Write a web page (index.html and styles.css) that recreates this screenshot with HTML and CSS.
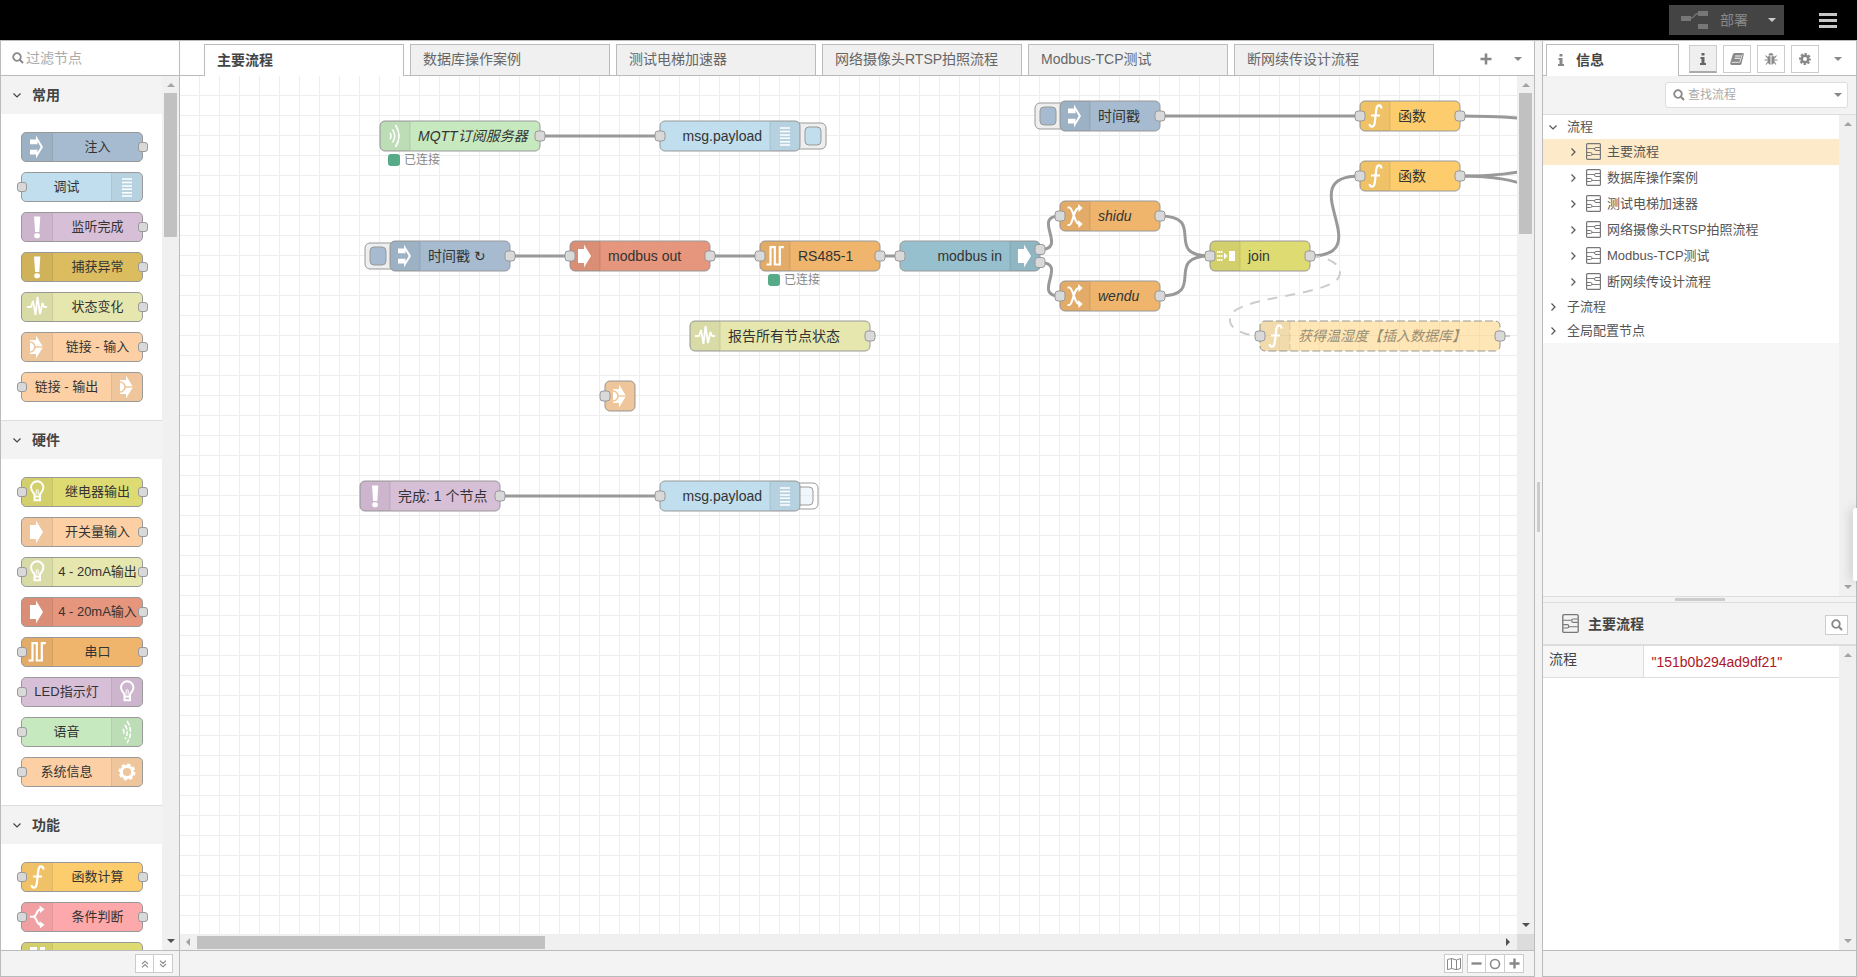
FILE: index.html
```html
<!DOCTYPE html>
<html lang="zh-CN">
<head>
<meta charset="utf-8">
<title>主要流程</title>
<link rel="stylesheet" href="styles.css">
</head>
<body>
<svg class="sprite" aria-hidden="true">
  <defs>
    <mask id="link-cut">
      <rect width="30" height="30" fill="#fff"/>
      <circle cx="8" cy="15" r="5" fill="none" stroke="#000" stroke-width="1.600"/>
      <path d="M13 15H21" stroke="#000" stroke-width="1.400"/>
    </mask>
  </defs>
  <symbol id="n-inject" viewBox="0 0 30 30"><path fill="#fff" fill-rule="evenodd" d="M8 7.500h6V3.500L21 15L14 26.500V22.500H8v-4.700h7.500V20.500L18.700 15L15.500 9.500v2.700H8z"/></symbol>
  <symbol id="n-arrow" viewBox="0 0 30 30"><path fill="#fff" d="M8 8h6V3.500L21 15L14 26.500V22H8z"/></symbol>
  <symbol id="n-debug" viewBox="0 0 30 30"><path stroke="#fff" stroke-width="1.600" d="M10 7h10M10 10.500h10M10 14h10M10 17.300h10M10 20.700h10M10 24h10"/></symbol>
  <symbol id="n-alert" viewBox="0 0 30 30"><path fill="#fff" d="M12 4.500h6.300L17.300 20h-4.200z"/><rect x="12.300" y="21.300" width="5.600" height="5" rx="2" fill="#fff"/></symbol>
  <symbol id="n-pulse" viewBox="0 0 30 30"><path fill="none" stroke="#fff" stroke-width="1.800" stroke-linejoin="bevel" d="M5 15h4l2-6 2.500 14L15.500 5 18 22l2.500-11 1.500 4h3"/></symbol>
  <symbol id="n-link" viewBox="0 0 30 30"><path mask="url(#link-cut)" fill="#fff" d="M8 8h6V3.500L21 15L14 26.500V22H8z"/></symbol>
  <symbol id="n-bulb" viewBox="0 0 30 30"><path fill="none" stroke="#fff" stroke-width="2" d="M12.500 17.500C11.500 15.500 9 14 9 10.500a6.200 6.200 0 0 1 12.400 0C21.400 14 19 15.500 18 17.500v5.700h-5.500zM12.500 19.500H18"/><path fill="none" stroke="#fff" stroke-width="1" d="M14.200 17.500v-4.300q1-1.400 2 0v4.300"/></symbol>
  <symbol id="n-serial" viewBox="0 0 30 30"><path fill="none" stroke="#fff" stroke-width="2.200" d="M6.500 23.500h4V6.200h4.300V23.500h5V6.200H23.800"/></symbol>
  <symbol id="n-waves" viewBox="0 0 30 30"><g fill="none" stroke="#fff" stroke-width="1.600"><path d="M10 12q2 3 0 6"/><path d="M12.500 8.500q4.500 6.500 0 13"/><path d="M15.500 4q7 11 0 22"/></g></symbol>
  <symbol id="n-speech" viewBox="0 0 30 30"><g fill="none" stroke="#fff" stroke-width="1.600" stroke-dasharray="5 1.500"><path d="M11 12q2 3 0 6"/><path d="M13 8q4.500 7 0 14"/><path d="M15 4q7 11 0 22"/></g></symbol>
  <symbol id="n-cog" viewBox="0 0 30 30"><circle cx="15" cy="15" r="5.600" fill="none" stroke="#fff" stroke-width="3"/><circle cx="15" cy="15" r="7.300" fill="none" stroke="#fff" stroke-width="2.400" stroke-dasharray="3.300 2.430"/></symbol>
  <symbol id="n-function" viewBox="0 0 30 30"><path fill="none" stroke="#fff" stroke-width="2.200" d="M21.500 7.500C21.300 4.500 20.300 4.300 19 4.300C16.800 4.300 16.600 6 16.300 8.500L14.800 21.500C14.400 24.500 13.700 25.600 11.800 25.600C10.300 25.600 9.700 24.800 9.600 23M11 14.500H20"/></symbol>
  <symbol id="n-switch" viewBox="0 0 30 30"><path fill="none" stroke="#fff" stroke-width="2" d="M8 14.700h3C15.500 14.700 13.500 7.500 19 7M11 14.700C15.500 14.700 13.500 22.500 19 23"/><path fill="#fff" d="M17.500 3.500L22.500 7.200L18 11zM17.500 19L22.500 22.800L18 26.500z"/></symbol>
  <symbol id="n-change" viewBox="0 0 30 30"><path fill="none" stroke="#fff" stroke-width="2.200" d="M7.500 6.500h1.800C13 6.500 14.500 23 19 23M7.500 24h1.800C13 24 13.500 7 19 7"/><path fill="#fff" d="M18 3L22.700 7L18.500 11zM18 19L22.700 23L18.500 27z"/></symbol>
  <symbol id="n-join" viewBox="0 0 30 30"><path fill="none" stroke="#fff" stroke-width="2" stroke-dasharray="1.500 .5" d="M7 11h5.500M7 15h5.500M7 19h5.500"/><path fill="#fff" d="M14 11.800L17.500 15L14 18.200zM19 10h6v10h-6z"/></symbol>
  <symbol id="n-blocks" viewBox="0 0 30 30"><path fill="#fff" d="M8 5h7v5H8zM18 5h5v5h-5z"/></symbol>

  <symbol id="i-search" viewBox="0 0 12 12"><circle cx="5" cy="5" r="3.800" fill="none" stroke="currentColor" stroke-width="1.800"/><path d="M7.800 7.800L11 11" stroke="currentColor" stroke-width="2"/></symbol>
  <symbol id="i-caret" viewBox="0 0 8 4"><path fill="currentColor" d="M0 0h8L4 4z"/></symbol>
  <symbol id="i-down" viewBox="0 0 8 8"><path fill="none" stroke="currentColor" stroke-width="1.200" d="M.5 2.500L4 6L7.500 2.500"/></symbol>
  <symbol id="i-right" viewBox="0 0 8 8"><path fill="none" stroke="currentColor" stroke-width="1.200" d="M2.500.5L6 4L2.500 7.500"/></symbol>
  <symbol id="i-up2" viewBox="0 0 8 8"><path fill="none" stroke="currentColor" stroke-width="1.100" d="M1 4L4 1.200L7 4M1 7.300L4 4.500L7 7.300"/></symbol>
  <symbol id="i-down2" viewBox="0 0 8 8"><path fill="none" stroke="currentColor" stroke-width="1.100" d="M1 .7L4 3.500L7 .7M1 4L4 6.800L7 4"/></symbol>
  <symbol id="i-plus" viewBox="0 0 12 12"><path stroke="currentColor" stroke-width="2.600" d="M.5 6h11M6 .5v11"/></symbol>
  <symbol id="i-minus" viewBox="0 0 12 12"><path stroke="currentColor" stroke-width="2.600" d="M.5 6h11"/></symbol>
  <symbol id="i-circle" viewBox="0 0 12 12"><circle cx="6" cy="6" r="4.500" fill="none" stroke="currentColor" stroke-width="1.600"/></symbol>
  <symbol id="i-map" viewBox="0 0 14 12"><path fill="none" stroke="currentColor" d="M.5 1.500L4.500.5l5 1.500 4-1.500v10l-4 1.200-5-1.200-4 1.200zM4.500.5v10M9.500 2v10"/></symbol>
  <symbol id="i-info" viewBox="0 0 6 12"><path fill="currentColor" d="M1.500 0h3v2.500h-3zM.5 4h4v6H6v2H0v-2h1.500V6H.5z"/></symbol>
  <symbol id="i-book" viewBox="0 0 14 12"><path fill="currentColor" fill-rule="evenodd" d="M4.500 0H13q1 .3.800 1.300L11.500 10.500q-.3 1.500-1.800 1.500H1.500Q0 11.500.3 9.800L2.800 1.500Q3.200.2 4.500 0zM5.200 2.500L5 3.500h5.500l.3-1zM4.600 4.800l-.3 1h5.600l.3-1z"/><path stroke="#fff" stroke-width=".8" fill="none" d="M1.800 9.300H9.200Q9.800 9.200 10 8.500L12.200 1.500"/></symbol>
  <symbol id="i-bug" viewBox="0 0 14 12"><path fill="currentColor" d="M4.500 2.500a2.500 2.500 0 0 1 5 0zM3.500 3.300h3v8.500Q3.500 11 3.500 7.500zM7.500 3.300h3v4.200q0 3.500-3 4.300z"/><path fill="none" stroke="currentColor" stroke-width="1.100" d="M3.500 4.800L1.500 2.500M10.500 4.800l2-2.300M3.500 7H.5M10.500 7h3M4 9L2 11.500M10 9l2 2.500"/></symbol>
  <symbol id="i-cog" viewBox="0 0 12 12"><circle cx="6" cy="6" r="3.300" fill="none" stroke="currentColor" stroke-width="2.600"/><circle cx="6" cy="6" r="5" fill="none" stroke="currentColor" stroke-width="2" stroke-dasharray="2.300 1.627" stroke-dashoffset="1.100"/></symbol>
  <symbol id="i-flow" viewBox="0 0 15 17"><g fill="none" stroke="currentColor"><rect x=".6" y=".6" width="13.800" height="15.800" rx="1" stroke-width="1.200"/><path d="M14 4.500H10q-1.500 0-1.500 1.500t1.500 1.500h4M1 9.500h3.500q1.500 0 1.500 1.500t-1.500 1.500H1"/><path stroke-width=".9" d="M1 5.500h7.500M6 11.500h8"/></g></symbol>
  <symbol id="i-deploy" viewBox="0 0 27 18"><path fill="currentColor" d="M0 5h10v5H0zM17 0h10v5H17zM17 13h10v5H17z"/><path fill="none" stroke="currentColor" stroke-width="1.400" d="M9 7.500C14.500 7.500 12 2.500 17.500 2.500"/></symbol>
  <symbol id="i-menu" viewBox="0 0 18 15"><path fill="currentColor" d="M0 0h18v3H0zM0 6h18v3H0zM0 12h18v3H0z"/></symbol>
</svg>

<header class="header">
  <button class="deploy" type="button">
    <svg class="deploy-icon"><use href="#i-deploy"/></svg><span>部署</span><svg class="caret"><use href="#i-caret"/></svg>
  </button>
  <button class="menu" type="button" aria-label="菜单"><svg><use href="#i-menu"/></svg></button>
</header>

<main class="main">
  <aside class="palette">
    <label class="palette-search"><svg class="ico"><use href="#i-search"/></svg><input type="text" placeholder="过滤节点"></label>
    <div class="scroll-area">
      <div class="palette-list">
        <section class="category">
          <h3><svg class="chev"><use href="#i-down"/></svg>常用</h3>
          <div class="nodes">
            <div class="node blue"><span class="icon"><svg><use href="#n-inject"/></svg></span><span class="label">注入</span><i class="port out"></i></div>
            <div class="node sky flip"><span class="icon"><svg><use href="#n-debug"/></svg></span><span class="label">调试</span><i class="port in"></i></div>
            <div class="node mauve"><span class="icon"><svg><use href="#n-alert"/></svg></span><span class="label">监听完成</span><i class="port out"></i></div>
            <div class="node gold"><span class="icon"><svg><use href="#n-alert"/></svg></span><span class="label">捕获异常</span><i class="port out"></i></div>
            <div class="node lime"><span class="icon"><svg><use href="#n-pulse"/></svg></span><span class="label">状态变化</span><i class="port out"></i></div>
            <div class="node peach"><span class="icon"><svg><use href="#n-link"/></svg></span><span class="label">链接 - 输入</span><i class="port out"></i></div>
            <div class="node peach flip"><span class="icon"><svg><use href="#n-link"/></svg></span><span class="label">链接 - 输出</span><i class="port in"></i></div>
          </div>
        </section>
        <section class="category">
          <h3><svg class="chev"><use href="#i-down"/></svg>硬件</h3>
          <div class="nodes">
            <div class="node yellow"><span class="icon"><svg><use href="#n-bulb"/></svg></span><span class="label">继电器输出</span><i class="port in"></i><i class="port out"></i></div>
            <div class="node peach"><span class="icon"><svg><use href="#n-arrow"/></svg></span><span class="label">开关量输入</span><i class="port out"></i></div>
            <div class="node lime"><span class="icon"><svg><use href="#n-bulb"/></svg></span><span class="label">4 - 20mA输出</span><i class="port in"></i><i class="port out"></i></div>
            <div class="node salmon"><span class="icon"><svg><use href="#n-arrow"/></svg></span><span class="label">4 - 20mA输入</span><i class="port out"></i></div>
            <div class="node orange"><span class="icon"><svg><use href="#n-serial"/></svg></span><span class="label">串口</span><i class="port in"></i><i class="port out"></i></div>
            <div class="node mauve flip"><span class="icon"><svg><use href="#n-bulb"/></svg></span><span class="label">LED指示灯</span><i class="port in"></i></div>
            <div class="node green flip"><span class="icon"><svg><use href="#n-speech"/></svg></span><span class="label">语音</span><i class="port in"></i></div>
            <div class="node peach flip"><span class="icon"><svg><use href="#n-cog"/></svg></span><span class="label">系统信息</span><i class="port in"></i></div>
          </div>
        </section>
        <section class="category">
          <h3><svg class="chev"><use href="#i-down"/></svg>功能</h3>
          <div class="nodes">
            <div class="node amber"><span class="icon"><svg><use href="#n-function"/></svg></span><span class="label">函数计算</span><i class="port in"></i><i class="port out"></i></div>
            <div class="node pink"><span class="icon"><svg><use href="#n-switch"/></svg></span><span class="label">条件判断</span><i class="port in"></i><i class="port out"></i></div>
            <div class="node yellow"><span class="icon"><svg><use href="#n-blocks"/></svg></span><span class="label"></span></div>
          </div>
        </section>
      </div>
      <div class="vbar" aria-hidden="true"><svg class="arrow up"><use href="#i-caret"/></svg><i class="thumb tall"></i><svg class="arrow end dark"><use href="#i-caret"/></svg></div>
    </div>
    <footer class="footer">
      <div class="group"><button type="button" aria-label="全部折叠"><svg class="tiny"><use href="#i-up2"/></svg></button><button type="button" aria-label="全部展开"><svg class="tiny"><use href="#i-down2"/></svg></button></div>
    </footer>
  </aside>

  <section class="workspace">
    <div class="tabbar" role="tablist">
      <div class="tabs">
        <button class="tab active" role="tab" type="button">主要流程</button>
        <button class="tab" role="tab" type="button">数据库操作案例</button>
        <button class="tab" role="tab" type="button">测试电梯加速器</button>
        <button class="tab" role="tab" type="button">网络摄像头RTSP拍照流程</button>
        <button class="tab" role="tab" type="button">Modbus-TCP测试</button>
        <button class="tab" role="tab" type="button">断网续传设计流程</button>
      </div>
      <button class="bare" type="button" aria-label="添加流程"><svg class="ico"><use href="#i-plus"/></svg></button>
      <button class="bare" type="button" aria-label="流程列表"><svg class="caret"><use href="#i-caret"/></svg></button>
    </div>
    <div class="scroll-area">
      <div class="canvas">
        <svg class="flow" width="1400" height="900">
          <g class="wires">
            <path d="M360 60H480"/><path d="M330 180H390"/><path d="M530 180H580"/><path d="M700 180H720"/>
            <path d="M860 173.500C889 173.500 851 140 880 140"/><path d="M860 186.500C889 186.500 851 220 880 220"/>
            <path d="M980 140C1028 140 982 180 1030 180"/><path d="M980 220C1028 220 982 180 1030 180"/>
            <path d="M1130 180C1201 180 1109 100 1180 100"/>
            <path d="M980 40H1180"/><path d="M320 420H480"/>
            <path d="M1280 40C1355 40 1345 46 1420 46"/>
            <path d="M1280 100C1355 100 1345 88 1420 88"/><path d="M1280 100C1355 100 1345 120 1420 120"/>
            <path class="off" d="M1130 180C1145 180 1160 187.500 1160 195S1160 210 1105 220S1050 237.500 1050 245S1065 260 1080 260"/>
            <path class="off" d="M1320 260H1400"/>
          </g>

          <g transform="translate(200 45)">
            <rect class="body green" width="160" height="30" rx="5"/><path class="shade" d="M5 0H30V30H5a5 5 0 0 1-5-5V5a5 5 0 0 1 5-5z"/><path class="rule" d="M30 1V29"/><use href="#n-waves" width="30" height="30"/>
            <text class="it" x="38" y="20">MQTT订阅服务器</text><rect class="pt" x="155" y="10" width="10" height="10" rx="3"/>
            <rect class="dot" x="8" y="33" width="12" height="12" rx="3"/><text class="status" x="24" y="43">已连接</text>
          </g>
          <g transform="translate(480 45)">
            <rect class="btn" x="134" y="2" width="32" height="26" rx="5"/><rect class="knob sky" x="145" y="6" width="16" height="18" rx="4"/>
            <rect class="body sky" width="140" height="30" rx="5"/><path class="shade" d="M110 0H135a5 5 0 0 1 5 5V25a5 5 0 0 1-5 5H110z"/><path class="rule" d="M110 1V29"/><use href="#n-debug" x="110" width="30" height="30"/>
            <text class="end" x="102" y="20">msg.payload</text><rect class="pt" x="-5" y="10" width="10" height="10" rx="3"/>
          </g>
          <g transform="translate(210 165)">
            <rect class="btn" x="-25" y="2" width="32" height="26" rx="5"/><rect class="knob blue" x="-20" y="6" width="16" height="18" rx="4"/>
            <rect class="body blue" width="120" height="30" rx="5"/><path class="shade" d="M5 0H30V30H5a5 5 0 0 1-5-5V5a5 5 0 0 1 5-5z"/><path class="rule" d="M30 1V29"/><use href="#n-inject" width="30" height="30"/>
            <text x="38" y="20">时间戳 ↻</text><rect class="pt" x="115" y="10" width="10" height="10" rx="3"/>
          </g>
          <g transform="translate(390 165)">
            <rect class="body salmon" width="140" height="30" rx="5"/><path class="shade" d="M5 0H30V30H5a5 5 0 0 1-5-5V5a5 5 0 0 1 5-5z"/><path class="rule" d="M30 1V29"/><use href="#n-arrow" width="30" height="30"/>
            <text x="38" y="20">modbus out</text><rect class="pt" x="-5" y="10" width="10" height="10" rx="3"/><rect class="pt" x="135" y="10" width="10" height="10" rx="3"/>
          </g>
          <g transform="translate(580 165)">
            <rect class="body orange" width="120" height="30" rx="5"/><path class="shade" d="M5 0H30V30H5a5 5 0 0 1-5-5V5a5 5 0 0 1 5-5z"/><path class="rule" d="M30 1V29"/><use href="#n-serial" width="30" height="30"/>
            <text x="38" y="20">RS485-1</text><rect class="pt" x="-5" y="10" width="10" height="10" rx="3"/><rect class="pt" x="115" y="10" width="10" height="10" rx="3"/>
            <rect class="dot" x="8" y="33" width="12" height="12" rx="3"/><text class="status" x="24" y="43">已连接</text>
          </g>
          <g transform="translate(720 165)">
            <rect class="body teal" width="140" height="30" rx="5"/><path class="shade" d="M110 0H135a5 5 0 0 1 5 5V25a5 5 0 0 1-5 5H110z"/><path class="rule" d="M110 1V29"/><use href="#n-arrow" x="110" width="30" height="30"/>
            <text class="end" x="102" y="20">modbus in</text><rect class="pt" x="-5" y="10" width="10" height="10" rx="3"/><rect class="pt" x="135" y="3.500" width="10" height="10" rx="3"/><rect class="pt" x="135" y="16.500" width="10" height="10" rx="3"/>
          </g>
          <g transform="translate(880 125)">
            <rect class="body orange" width="100" height="30" rx="5"/><path class="shade" d="M5 0H30V30H5a5 5 0 0 1-5-5V5a5 5 0 0 1 5-5z"/><path class="rule" d="M30 1V29"/><use href="#n-change" width="30" height="30"/>
            <text class="it" x="38" y="20">shidu</text><rect class="pt" x="-5" y="10" width="10" height="10" rx="3"/><rect class="pt" x="95" y="10" width="10" height="10" rx="3"/>
          </g>
          <g transform="translate(880 205)">
            <rect class="body orange" width="100" height="30" rx="5"/><path class="shade" d="M5 0H30V30H5a5 5 0 0 1-5-5V5a5 5 0 0 1 5-5z"/><path class="rule" d="M30 1V29"/><use href="#n-change" width="30" height="30"/>
            <text class="it" x="38" y="20">wendu</text><rect class="pt" x="-5" y="10" width="10" height="10" rx="3"/><rect class="pt" x="95" y="10" width="10" height="10" rx="3"/>
          </g>
          <g transform="translate(1030 165)">
            <rect class="body yellow" width="100" height="30" rx="5"/><path class="shade" d="M5 0H30V30H5a5 5 0 0 1-5-5V5a5 5 0 0 1 5-5z"/><path class="rule" d="M30 1V29"/><use href="#n-join" width="30" height="30"/>
            <text x="38" y="20">join</text><rect class="pt" x="-5" y="10" width="10" height="10" rx="3"/><rect class="pt" x="95" y="10" width="10" height="10" rx="3"/>
          </g>
          <g transform="translate(880 25)">
            <rect class="btn" x="-25" y="2" width="32" height="26" rx="5"/><rect class="knob blue" x="-20" y="6" width="16" height="18" rx="4"/>
            <rect class="body blue" width="100" height="30" rx="5"/><path class="shade" d="M5 0H30V30H5a5 5 0 0 1-5-5V5a5 5 0 0 1 5-5z"/><path class="rule" d="M30 1V29"/><use href="#n-inject" width="30" height="30"/>
            <text x="38" y="20">时间戳</text><rect class="pt" x="95" y="10" width="10" height="10" rx="3"/>
          </g>
          <g transform="translate(1180 25)">
            <rect class="body amber" width="100" height="30" rx="5"/><path class="shade" d="M5 0H30V30H5a5 5 0 0 1-5-5V5a5 5 0 0 1 5-5z"/><path class="rule" d="M30 1V29"/><use href="#n-function" width="30" height="30"/>
            <text x="38" y="20">函数</text><rect class="pt" x="-5" y="10" width="10" height="10" rx="3"/><rect class="pt" x="95" y="10" width="10" height="10" rx="3"/>
          </g>
          <g transform="translate(1180 85)">
            <rect class="body amber" width="100" height="30" rx="5"/><path class="shade" d="M5 0H30V30H5a5 5 0 0 1-5-5V5a5 5 0 0 1 5-5z"/><path class="rule" d="M30 1V29"/><use href="#n-function" width="30" height="30"/>
            <text x="38" y="20">函数</text><rect class="pt" x="-5" y="10" width="10" height="10" rx="3"/><rect class="pt" x="95" y="10" width="10" height="10" rx="3"/>
          </g>
          <g transform="translate(1080 245)">
            <g class="disabled"><rect class="body amber" width="240" height="30" rx="5"/><path class="shade" d="M5 0H30V30H5a5 5 0 0 1-5-5V5a5 5 0 0 1 5-5z"/><path class="rule" d="M30 1V29"/><text class="it" x="38" y="20">获得温湿度【插入数据库】</text></g>
            <use href="#n-function" width="30" height="30"/>
            <rect class="pt" x="-5" y="10" width="10" height="10" rx="3"/><rect class="pt" x="235" y="10" width="10" height="10" rx="3"/>
          </g>
          <g transform="translate(510 245)">
            <rect class="body lime" width="180" height="30" rx="5"/><path class="shade" d="M5 0H30V30H5a5 5 0 0 1-5-5V5a5 5 0 0 1 5-5z"/><path class="rule" d="M30 1V29"/><use href="#n-pulse" width="30" height="30"/>
            <text x="38" y="20">报告所有节点状态</text><rect class="pt" x="175" y="10" width="10" height="10" rx="3"/>
          </g>
          <g transform="translate(425 305)">
            <rect class="body peach" width="30" height="30" rx="5"/><rect class="shade" width="30" height="30" rx="5"/><use href="#n-link" width="30" height="30"/>
            <rect class="pt" x="-5" y="10" width="10" height="10" rx="3"/>
          </g>
          <g transform="translate(180 405)">
            <rect class="body mauve" width="140" height="30" rx="5"/><path class="shade" d="M5 0H30V30H5a5 5 0 0 1-5-5V5a5 5 0 0 1 5-5z"/><path class="rule" d="M30 1V29"/><use href="#n-alert" width="30" height="30"/>
            <text x="38" y="20">完成: 1 个节点</text><rect class="pt" x="135" y="10" width="10" height="10" rx="3"/>
          </g>
          <g transform="translate(480 405)">
            <rect class="btn clear" x="126" y="2" width="32" height="26" rx="5"/><rect class="knob sky clear" x="137" y="6" width="16" height="18" rx="4"/>
            <rect class="body sky" width="140" height="30" rx="5"/><path class="shade" d="M110 0H135a5 5 0 0 1 5 5V25a5 5 0 0 1-5 5H110z"/><path class="rule" d="M110 1V29"/><use href="#n-debug" x="110" width="30" height="30"/>
            <text class="end" x="102" y="20">msg.payload</text><rect class="pt" x="-5" y="10" width="10" height="10" rx="3"/>
          </g>
        </svg>
      </div>
      <div class="vbar" aria-hidden="true"><svg class="arrow up"><use href="#i-caret"/></svg><i class="thumb"></i><svg class="arrow end dark"><use href="#i-caret"/></svg></div>
    </div>
    <div class="hbar" aria-hidden="true"><svg class="arrow left"><use href="#i-caret"/></svg><i class="hthumb"></i><svg class="arrow right dark"><use href="#i-caret"/></svg><i class="corner"></i></div>
    <footer class="footer">
      <div class="group"><button type="button" aria-label="导航图"><svg class="map"><use href="#i-map"/></svg></button></div>
      <div class="group"><button type="button" aria-label="缩小"><svg class="small"><use href="#i-minus"/></svg></button><button type="button" aria-label="重置缩放"><svg class="ico"><use href="#i-circle"/></svg></button><button type="button" aria-label="放大"><svg class="small"><use href="#i-plus"/></svg></button></div>
    </footer>
  </section>

  <div class="splitter"><i></i></div>

  <aside class="sidebar">
    <div class="tabbar">
      <button class="tab active info-tab" type="button"><svg class="info"><use href="#i-info"/></svg>信息</button>
      <div class="side-buttons">
        <button class="on" type="button" aria-label="信息"><svg class="info"><use href="#i-info"/></svg></button>
        <button type="button" aria-label="帮助"><svg class="wide"><use href="#i-book"/></svg></button>
        <button type="button" aria-label="调试窗口"><svg class="wide"><use href="#i-bug"/></svg></button>
        <button type="button" aria-label="配置节点"><svg class="ico"><use href="#i-cog"/></svg></button>
      </div>
      <button class="bare" type="button" aria-label="更多"><svg class="caret"><use href="#i-caret"/></svg></button>
    </div>
    <div class="side-toolbar">
      <label class="side-search"><svg class="ico"><use href="#i-search"/></svg><input type="text" placeholder="查找流程"><svg class="caret"><use href="#i-caret"/></svg></label>
    </div>
    <div class="scroll-area outline">
      <ul class="tree">
        <li class="root"><svg class="chev"><use href="#i-down"/></svg>流程</li>
        <li class="leaf selected"><svg class="chev"><use href="#i-right"/></svg><svg class="flow-icon"><use href="#i-flow"/></svg>主要流程</li>
        <li class="leaf"><svg class="chev"><use href="#i-right"/></svg><svg class="flow-icon"><use href="#i-flow"/></svg>数据库操作案例</li>
        <li class="leaf"><svg class="chev"><use href="#i-right"/></svg><svg class="flow-icon"><use href="#i-flow"/></svg>测试电梯加速器</li>
        <li class="leaf"><svg class="chev"><use href="#i-right"/></svg><svg class="flow-icon"><use href="#i-flow"/></svg>网络摄像头RTSP拍照流程</li>
        <li class="leaf"><svg class="chev"><use href="#i-right"/></svg><svg class="flow-icon"><use href="#i-flow"/></svg>Modbus-TCP测试</li>
        <li class="leaf"><svg class="chev"><use href="#i-right"/></svg><svg class="flow-icon"><use href="#i-flow"/></svg>断网续传设计流程</li>
        <li class="root"><svg class="chev"><use href="#i-right"/></svg>子流程</li>
        <li class="root"><svg class="chev"><use href="#i-right"/></svg>全局配置节点</li>
      </ul>
      <div class="vbar" aria-hidden="true"><svg class="arrow up"><use href="#i-caret"/></svg><svg class="arrow end"><use href="#i-caret"/></svg></div>
    </div>
    <div class="hsplit"><i></i></div>
    <div class="detail-head"><svg class="flow-icon big"><use href="#i-flow"/></svg><h2>主要流程</h2><button type="button" aria-label="查找"><svg class="ico"><use href="#i-search"/></svg></button></div>
    <div class="scroll-area detail">
      <div class="detail-body">
        <table><tr><th scope="row">流程</th><td>"151b0b294ad9df21"</td></tr></table>
      </div>
      <div class="vbar" aria-hidden="true"><svg class="arrow up"><use href="#i-caret"/></svg><svg class="arrow end"><use href="#i-caret"/></svg></div>
    </div>
    <footer class="footer"></footer>
  </aside>
</main>
<div class="edge-handle"></div>
</body>
</html>
```
FILE: styles.css
```css
* { box-sizing: border-box; }
body {
  margin: 0;
  height: 100vh;
  display: flex;
  flex-direction: column;
  overflow: hidden;
  background: #f3f3f3;
  color: #444;
  font: 14px/20px "Liberation Sans", "Noto Sans CJK SC", "DejaVu Sans", sans-serif;
}
button, input { font: inherit; color: inherit; margin: 0; padding: 0; border: 0; background: none; }
input { outline: 0; width: 100%; min-width: 0; }
input::placeholder { color: #aaa; opacity: 1; }
h2, h3, ul { margin: 0; padding: 0; font-size: 14px; list-style: none; }
button { display: flex; align-items: center; justify-content: center; }
svg { display: block; flex: none; }
.sprite { position: absolute; width: 0; height: 0; }
.ico { width: 12px; height: 12px; }
.small { width: 11px; height: 11px; }
.tiny { width: 8px; height: 8px; }
.map, .wide { width: 14px; height: 12px; }
.info { width: 6px; height: 12px; }
.caret { width: 8px; height: 4px; }
.chev { width: 8px; height: 8px; }

.header { flex: none; height: 40px; background: #000; display: flex; align-items: center; justify-content: flex-end; padding-right: 20px; gap: 35px; }
.deploy { width: 115px; height: 30px; background: #444; color: #888; padding: 0 8px 0 12px; gap: 12px; }
.deploy .caret { color: #ccc; margin-left: auto; }
.deploy-icon { width: 27px; height: 18px; color: #777; }
.menu { color: #c7c7c7; }
.menu svg { width: 18px; height: 15px; }

.main { flex: 1; min-height: 0; display: grid; grid-template-columns: 180px minmax(0, 1fr) 7px 315px; }
.palette, .workspace, .sidebar { display: flex; flex-direction: column; min-width: 0; min-height: 0; border: 1px solid #bbb; background: #fff; }
.workspace { border-left: 0; }
.scroll-area { flex: 1; min-height: 0; display: flex; overflow: hidden; }

.vbar { width: 17px; flex: none; background: #f0f0f0; display: flex; flex-direction: column; align-items: center; padding: 7px 0; gap: 6px; }
.arrow { width: 8px; height: 4px; color: #a3a3a3; }
.arrow.dark { color: #505050; }
.up { transform: rotate(180deg); }
.end { margin-top: auto; }
.thumb { width: 13px; height: 141px; background: #c1c1c1; }
.thumb.tall { height: 144px; }
.hbar { flex: none; height: 16px; background: #f0f0f0; display: flex; align-items: center; padding-left: 4px; gap: 5px; }
.hthumb { width: 348px; height: 13px; background: #c1c1c1; }
.left { transform: rotate(90deg); }
.right { transform: rotate(-90deg); margin-left: auto; }
.corner { width: 17px; height: 16px; background: #dcdcdc; }

.footer { flex: none; height: 26px; border-top: 1px solid #bbb; background: #f3f3f3; display: flex; align-items: center; justify-content: flex-end; gap: 4px; padding-right: 6px; color: #888; }
.workspace .footer { padding-right: 10px; }
.group { display: flex; border: 1px solid #ccc; background: #fff; }
.group button { width: 17px; height: 17px; }
.group button + button { width: 19px; border-left: 1px solid #ccc; }

.palette-search { flex: none; height: 35px; border-bottom: 1px solid #bbb; display: flex; align-items: center; gap: 2px; padding-left: 11px; color: #888; }
.palette-list { flex: 1; overflow: hidden; }
.category { border-bottom: 1px solid #ddd; }
.category h3 { height: 38px; display: flex; align-items: center; gap: 11px; padding-left: 12px; background: #f3f3f3; }
.nodes { display: flex; flex-direction: column; gap: 10px; padding: 18px 19px 18px 20px; }
.node { position: relative; height: 30px; display: flex; border: 1px solid #999; border-radius: 5px; font-size: 13px; color: #333; }
.node .icon { width: 31px; flex: none; background: rgba(0, 0, 0, .05); border-right: 1px solid rgba(0, 0, 0, .06); border-radius: 4px 0 0 4px; display: flex; align-items: center; }
.node .icon svg { width: 30px; height: 30px; }
.node .label { flex: 1; display: flex; align-items: center; justify-content: center; white-space: nowrap; }
.flip { flex-direction: row-reverse; }
.flip .icon { border-right: 0; border-left: 1px solid rgba(0, 0, 0, .06); border-radius: 0 4px 4px 0; }
.port { position: absolute; top: 9px; width: 10px; height: 10px; border: 1px solid #999; border-radius: 3px; background: #d9d9d9; }
.port.in { left: -5px; }
.port.out { right: -6px; }

.blue { background: #a6bbcf; fill: #a6bbcf; }
.sky { background: #c0deed; fill: #c0deed; }
.mauve { background: #d8bfd8; fill: #d8bfd8; }
.gold { background: #dbbc5f; fill: #dbbc5f; }
.lime { background: #e5e7af; fill: #e5e7af; }
.peach { background: #fcd0a4; fill: #fcd0a4; }
.yellow { background: #dfdb73; fill: #dfdb73; }
.salmon { background: #e6967c; fill: #e6967c; }
.orange { background: #efb56d; fill: #efb56d; }
.green { background: #c7e9c0; fill: #c7e9c0; }
.amber { background: #fdcd6d; fill: #fdcd6d; }
.pink { background: #fda9ab; fill: #fda9ab; }
.teal { fill: #97c0ce; }

.tabbar { flex: none; height: 35px; border-bottom: 1px solid #bbb; display: flex; padding-top: 3px; color: #888; }
.tabs { flex: 1; min-width: 0; display: flex; gap: 6px; padding-left: 24px; }
.tab { flex: 0 1 200px; min-width: 0; height: 31px; justify-content: flex-start; padding: 0 12px 2px; border: 1px solid #bbb; border-bottom: 0; background: #f0f0f0; color: #666; white-space: nowrap; overflow: hidden; }
.tab.active { height: 32px; background: #fff; color: #444; font-weight: bold; }
.bare { width: 32px; height: 24px; margin-top: 3px; }
.canvas { flex: 1; min-width: 0; overflow: hidden; background-color: #fff; background-image: linear-gradient(to right, transparent 19px, #eee 19px), linear-gradient(to bottom, transparent 19px, #eee 19px); background-size: 20px 20px; }

.wires path { fill: none; stroke: #999; stroke-width: 3; }
.wires .off { stroke: #ccc; stroke-width: 2; stroke-dasharray: 10 8; }
.body, .pt, .btn, .knob { stroke: #999; }
.pt { fill: #d9d9d9; }
.btn { fill: #eee; }
.clear { fill-opacity: .25; }
.btn.clear { fill: #fff; }
.shade { fill: #000; fill-opacity: .05; }
.rule { stroke: #000; stroke-opacity: .1; }
.dot { fill: #5a8; }
.flow text { font-size: 14px; fill: #333; }
.flow .it { font-style: italic; }
.flow .end { text-anchor: end; }
.flow .status { font-size: 12px; fill: #888; }
.disabled .body { fill-opacity: .5; stroke-dasharray: 8 3; }
.disabled .rule { stroke-dasharray: 8 3; }
.disabled .it { fill-opacity: .5; }

.splitter { display: flex; align-items: center; justify-content: center; padding-bottom: 4px; border-top: 1px solid #bbb; background: #f3f3f3; }
.splitter i { width: 3px; height: 50px; background: #ccc; }

.sidebar .tabbar { padding-left: 3px; }
.info-tab { flex: 1; gap: 12px; padding-left: 11px; }
.info-tab .info { color: #888; }
.side-buttons { display: flex; gap: 6px; padding: 1px 0 0 10px; }
.side-buttons button { width: 28px; height: 28px; border: 1px solid #ccc; background: #fff; }
.side-buttons .on { background: #efefef; border-bottom: 2px solid #aaa; color: #666; }
.sidebar .bare { width: 37px; }
.side-toolbar { flex: none; height: 39px; padding: 6px 8px; border-bottom: 1px solid #ddd; background: #f3f3f3; display: flex; justify-content: flex-end; }
.side-search { width: 183px; height: 26px; border: 1px solid #ddd; border-radius: 3px; background: #fff; display: flex; align-items: center; gap: 3px; padding: 0 5px 0 7px; font-size: 12px; color: #888; }
.outline { flex: 481 1 0; background: #f7f7f7; }
.detail { flex: 304 1 0; }
.tree { flex: 1; font-size: 13px; align-self: flex-start; background: #fff; }
.tree li { display: flex; align-items: center; padding-bottom: 1px; color: #555; }
.tree .root { height: 24px; padding-left: 6px; gap: 10px; }
.tree .leaf { height: 26px; padding-left: 26px; gap: 6px; }
.leaf .chev { margin-right: 3px; }
.selected { background: #fdeac8; }
.flow-icon { width: 15px; height: 17px; color: #777; }
.flow-icon.big { width: 17px; height: 19px; }
.hsplit { flex: none; height: 7px; border: 1px solid #ddd; border-width: 1px 0; background: #f3f3f3; display: flex; align-items: center; justify-content: center; }
.hsplit i { width: 50px; height: 3px; background: #ccc; }
.detail-head { flex: none; height: 43px; border-bottom: 2px solid #ddd; background: #f3f3f3; display: flex; align-items: center; gap: 9px; padding: 0 8px 0 19px; }
.detail-head h2 { flex: 1; }
.detail-head button { width: 23px; height: 20px; margin-top: 3px; border: 1px solid #ccc; background: #fff; color: #888; }
.detail-body { flex: 1; }
.detail table { width: 100%; border-collapse: collapse; table-layout: fixed; }
.detail tr { border-bottom: 1px solid #ddd; }
.detail th { width: 100px; height: 31px; padding: 3px 6px 7px; border-right: 1px solid #ddd; background: #f7f7f7; font-weight: normal; text-align: left; vertical-align: top; }
.detail td { padding: 2px 8px 0; color: #ad1625; }

/* Collapsed drawer that peeks in over the right edge of the editor. */
.edge-handle { position: fixed; right: 0; top: 52vh; width: 4px; height: 73px; border-radius: 3px 0 0 3px; background: #fff; box-shadow: 0 0 12px rgba(0, 0, 0, .35); }
```
